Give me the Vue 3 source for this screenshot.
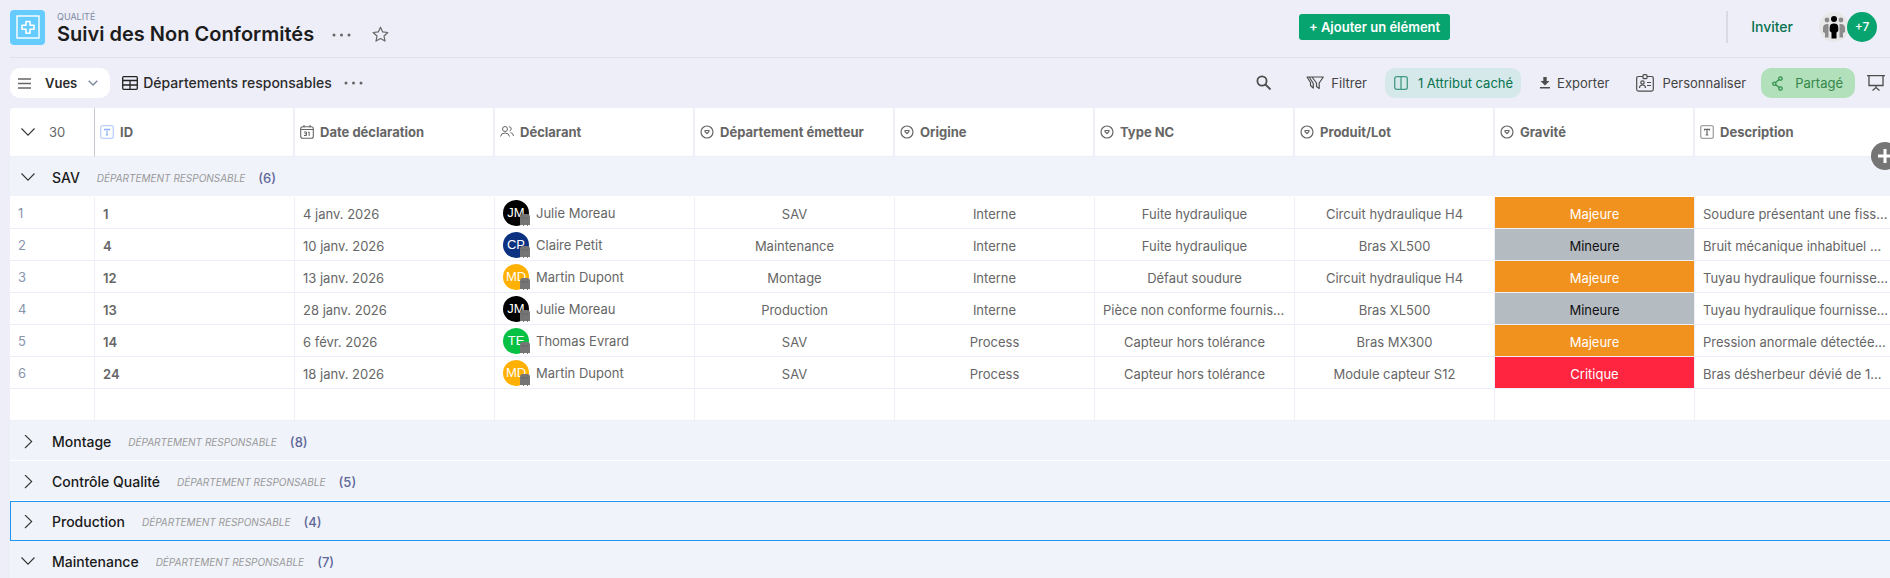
<script setup>
import { ref } from 'vue'

const columns = [
  { label: 'ID', icon: 'text', tone: 'blue' },
  { label: 'Date déclaration', icon: 'date' },
  { label: 'Déclarant', icon: 'people' },
  { label: 'Département émetteur', icon: 'select' },
  { label: 'Origine', icon: 'select' },
  { label: 'Type NC', icon: 'select' },
  { label: 'Produit/Lot', icon: 'select' },
  { label: 'Gravité', icon: 'select' },
  { label: 'Description', icon: 'text' },
]

const people = {
  JM: { name: 'Julie Moreau', tone: 'black' },
  CP: { name: 'Claire Petit', tone: 'navy' },
  MD: { name: 'Martin Dupont', tone: 'yellow' },
  TE: { name: 'Thomas Evrard', tone: 'green' },
}

const groups = ref([
  {
    name: 'SAV',
    count: 6,
    open: true,
    rows: [
      { id: 1, date: '4 janv. 2026', who: 'JM', dept: 'SAV', origin: 'Interne', type: 'Fuite hydraulique', product: 'Circuit hydraulique H4', level: 'Majeure', text: 'Soudure présentant une fissure' },
      { id: 4, date: '10 janv. 2026', who: 'CP', dept: 'Maintenance', origin: 'Interne', type: 'Fuite hydraulique', product: 'Bras XL500', level: 'Mineure', text: 'Bruit mécanique inhabituel moteur' },
      { id: 12, date: '13 janv. 2026', who: 'MD', dept: 'Montage', origin: 'Interne', type: 'Défaut soudure', product: 'Circuit hydraulique H4', level: 'Majeure', text: 'Tuyau hydraulique fournisseur' },
      { id: 13, date: '28 janv. 2026', who: 'JM', dept: 'Production', origin: 'Interne', type: 'Pièce non conforme fournisseur', product: 'Bras XL500', level: 'Mineure', text: 'Tuyau hydraulique fournisseur' },
      { id: 14, date: '6 févr. 2026', who: 'TE', dept: 'SAV', origin: 'Process', type: 'Capteur hors tolérance', product: 'Bras MX300', level: 'Majeure', text: 'Pression anormale détectée sur' },
      { id: 24, date: '18 janv. 2026', who: 'MD', dept: 'SAV', origin: 'Process', type: 'Capteur hors tolérance', product: 'Module capteur S12', level: 'Critique', text: 'Bras désherbeur dévié de 15 cm' },
    ],
  },
  { name: 'Montage', count: 8, open: false, rows: [] },
  { name: 'Contrôle Qualité', count: 5, open: false, rows: [] },
  { name: 'Production', count: 4, open: false, rows: [] },
  { name: 'Maintenance', count: 7, open: true, rows: [] },
])

const selected = ref('Production')

function toggle(group) {
  group.open = !group.open
  selected.value = group.name
}
</script>

<template>
  <div class="page">
    <header class="topbar">
      <svg class="logo" viewBox="0 0 35 35" fill="none" stroke="#fff">
        <rect x="7" y="6" width="22" height="22" stroke-width="1.4" />
        <path d="M16 11.5h4v3.700h4v4h-4v4h-4v-4h-4v-4h4z" stroke-width="1.6" stroke-linejoin="round" />
      </svg>
      <div class="heading">
        <span class="space">QUALITÉ</span>
        <h1>Suivi des Non Conformités</h1>
      </div>
      <button class="plain dots" aria-label="Options">
        <svg width="20" height="4" viewBox="0 0 20 4" fill="#666"><circle cx="2" cy="2" r="1.500" /><circle cx="9.500" cy="2" r="1.500" /><circle cx="17" cy="2" r="1.500" /></svg>
      </button>
      <button class="plain star" aria-label="Favori">
        <svg width="17" height="17" viewBox="0 0 17 17" fill="none" stroke="#666" stroke-width="1.2" stroke-linejoin="round"><path d="M8.500 1.200l2.200 4.700 5.100.600-3.800 3.500 1 5.100-4.500-2.500-4.500 2.500 1-5.100L1.200 6.500l5.100-.600z" /></svg>
      </button>
      <button class="add">+ Ajouter un élément</button>
      <div class="share">
        <a href="#" class="invite">Inviter</a>
        <svg class="team" viewBox="0 0 30 30">
          <circle cx="15" cy="15" r="15" fill="#e8e8e8" />
          <g fill="#8b8b8b">
            <circle cx="8" cy="8" r="2.400" /><circle cx="22" cy="8" r="2.400" />
            <path d="M9.500 12q-5.500-.5-5.500 4v4l2 1v4.500h3.500zM20.500 12q5.500-.5 5.500 4v4l-2 1v4.500h-3.500z" />
          </g>
          <circle cx="15" cy="7" r="3" />
          <path d="M15 11.500c-3 0-4.300 1.500-4.300 4v3.500l1.800 1.500v6h5v-6l1.800-1.500v-3.500c0-2.500-1.300-4-4.300-4z" />
        </svg>
        <span class="more">+7</span>
      </div>
    </header>

    <nav class="toolbar">
      <button class="views">
        <svg width="13" height="11" viewBox="0 0 13 11" stroke="#666" stroke-width="1.5"><path d="M0 1h13M0 5.500h13M0 10h13" /></svg>
        <span>Vues</span>
        <svg width="10" height="6" viewBox="0 0 10 6" fill="none" stroke="#7b879c" stroke-width="1.4"><path d="M.7.700L5 5 9.300.700" /></svg>
      </button>
      <h2 class="view-name">
        <svg width="16" height="14" viewBox="0 0 16 14" fill="none" stroke="#222" stroke-width="1.3"><rect x=".7" y=".7" width="14.600" height="12.600" rx="1" /><path d="M1 4.500h14M1 9h14M8 4.500V13" /></svg>
        Départements responsables
      </h2>
      <button class="plain view-dots" aria-label="Options de la vue">
        <svg width="20" height="4" viewBox="0 0 20 4" fill="#666"><circle cx="2" cy="2" r="1.500" /><circle cx="9.500" cy="2" r="1.500" /><circle cx="17" cy="2" r="1.500" /></svg>
      </button>

      <div class="tools">
        <button class="plain search" aria-label="Rechercher">
          <svg width="16" height="16" viewBox="0 0 16 16" fill="none" stroke="#4d4d4d" stroke-width="1.800"><circle cx="6" cy="6" r="4.600" /><path d="M9.500 9.500l5 5" /></svg>
        </button>
        <button class="plain filter">
          <svg width="18" height="14" viewBox="0 0 18 14" fill="none" stroke="#4d4d4d" stroke-width="1.200" stroke-linejoin="round"><path d="M6 1h11.300l-4.100 6v5.500l-2.700-2V7zM6.200 1H1l3.500 5.500v3l2.800 2.500V7.500L3.500 1.500" /></svg>
          Filtrer
        </button>
        <button class="plain hidden-attr">
          <svg width="14" height="14" viewBox="0 0 14 14" fill="none" stroke="#459b82" stroke-width="1.300"><rect x=".7" y=".7" width="12.600" height="12.600" rx="2" /><path d="M7 1v12" /></svg>
          1 Attribut caché
        </button>
        <button class="plain export">
          <svg width="10" height="12" viewBox="0 0 10 12" fill="#4d4d4d"><path d="M3.300 0h3.400v4H9.500L5 8.500.5 4h2.800zM0 10h10v1.500H0z" /></svg>
          Exporter
        </button>
        <button class="plain custom">
          <svg width="18" height="18" viewBox="0 0 18 18" fill="none" stroke="#4d4d4d" stroke-width="1.200"><path d="M7 2.500H2.500Q.7 2.500.7 4.300v11q0 1.800 1.800 1.800h13q1.800 0 1.800-1.800v-11q0-1.800-1.800-1.800H11" /><rect x="7" y=".7" width="4" height="4" rx="1" /><circle cx="6.500" cy="8.500" r="1.700" /><path d="M3.500 14q0-3 3-3t3 3M11 8.500h4M11 11.500h4" /></svg>
          Personnaliser
        </button>
        <button class="plain shared">
          <svg width="11" height="15" viewBox="0 0 11 15" fill="none" stroke="#36924e" stroke-width="1.300"><circle cx="8.500" cy="2.500" r="1.700" /><circle cx="2.300" cy="7.700" r="1.600" /><circle cx="8.500" cy="12.500" r="1.700" /><path d="M7.200 3.600L3.600 6.600M3.700 8.700l3.500 2.700" /></svg>
          Partagé
        </button>
        <button class="plain present" aria-label="Présenter">
          <svg width="18" height="16" viewBox="0 0 18 16" fill="none" stroke="#4d4d4d" stroke-width="1.300"><path d="M0 .7h18M2 1v9.500h14V1M9 10.500v2.500M5.500 15.500L9 12.500l3.500 3" /></svg>
        </button>
      </div>
    </nav>

    <main class="grid">
      <table>
        <colgroup>
          <col class="col-num">
          <col v-for="c in columns" :key="c.label" class="col-data">
        </colgroup>
        <thead>
          <tr>
            <th class="total" scope="col">
              <div class="head">
                <svg width="14" height="8" viewBox="0 0 14 8" fill="none" stroke="#333" stroke-width="1.100"><path d="M.5.500L7 7.200 13.500.500" /></svg>
                <span>30</span>
              </div>
            </th>
            <th v-for="c in columns" :key="c.label" scope="col">
              <div class="head" :class="c.tone">
                <svg v-if="c.icon === 'text'" class="ico" viewBox="0 0 14 14" fill="none">
                  <rect x=".7" y=".7" width="12.600" height="12.600" rx="2" stroke="currentColor" stroke-width="1.300" opacity=".6" />
                  <path d="M4.500 5.500v-1.200h5v1.200M7 4.300V10M5.700 10h2.600" stroke="currentColor" stroke-width="1.200" />
                </svg>
                <svg v-else-if="c.icon === 'date'" class="ico" viewBox="0 0 14 14" fill="none" stroke="currentColor">
                  <rect x=".7" y="1.700" width="12.600" height="11.600" rx="2" stroke-width="1.100" />
                  <path d="M1 4.500h12M4 0v2.500M10 0v2.500" stroke-width="1.100" />
                  <path d="M4 7h2.500v3.500H4M4.500 8.800h2M8 7.500L9.200 7v4" stroke-width="1" />
                </svg>
                <svg v-else-if="c.icon === 'people'" class="ico" viewBox="0 0 14 14" fill="none" stroke="currentColor" stroke-width="1">
                  <circle cx="5" cy="4" r="2.500" />
                  <path d="M.5 11.500q.5-3.500 4.500-3.500t4.500 3.500M9 1.600q2.500.4 2.200 2.400-.2 1.500-1.700 2M10.500 7.500q2.800.5 3 3.500" />
                </svg>
                <svg v-else class="ico" viewBox="0 0 14 14" fill="none" stroke="currentColor" stroke-width="1.200">
                  <circle cx="7" cy="7" r="6" />
                  <path d="M5 5.500h4v1L7 8.700 5 6.500z" stroke-linejoin="round" />
                </svg>
                <span>{{ c.label }}</span>
              </div>
            </th>
          </tr>
        </thead>
        <tbody v-for="g in groups" :key="g.name">
          <tr>
            <th class="group" :class="{ selected: selected === g.name }" colspan="10" scope="colgroup">
              <button class="plain group-btn" :aria-expanded="g.open" @click="toggle(g)">
                <svg width="14" height="14" viewBox="0 0 14 14" fill="none" stroke="#333" stroke-width="1.100">
                  <path v-if="g.open" d="M.5 2.500L7 9.200l6.500-6.700" />
                  <path v-else d="M4 0l6.700 6.500L4 13" />
                </svg>
                <span class="group-name">{{ g.name }}</span>
                <em>DÉPARTEMENT RESPONSABLE</em>
                <span class="group-count">({{ g.count }})</span>
              </button>
            </th>
          </tr>
          <template v-if="g.open && g.rows.length">
            <tr v-for="(r, i) in g.rows" :key="r.id">
              <td class="num">{{ i + 1 }}</td>
              <td class="id">{{ r.id }}</td>
              <td>{{ r.date }}</td>
              <td class="person">
                <div class="who">
                  <span class="avatar" :class="people[r.who].tone">
                    {{ r.who }}
                    <svg class="ghost" width="10" height="12" viewBox="0 0 10 12">
                      <path d="M0 11V3q0-3 3-3h4q3 0 3 3v8H8v1H7v-1H4v1H3v-1z" fill="#757575" />
                      <path d="M2.500 3.500l1 1M3.500 3.500l-1 1M6 3.500l1 1M7 3.500l-1 1" stroke="#4c4c4c" stroke-width=".6" />
                    </svg>
                  </span>
                  {{ people[r.who].name }}
                </div>
              </td>
              <td class="center">{{ r.dept }}</td>
              <td class="center">{{ r.origin }}</td>
              <td class="center">{{ r.type }}</td>
              <td class="center">{{ r.product }}</td>
              <td class="center level" :class="r.level.toLowerCase()">{{ r.level }}</td>
              <td class="desc">{{ r.text }}</td>
            </tr>
            <tr>
              <td v-for="n in 10" :key="n"></td>
            </tr>
          </template>
        </tbody>
      </table>
      <button class="add-column" aria-label="Ajouter une colonne">
        <svg width="14" height="14" viewBox="0 0 14 14" stroke="#fff" stroke-width="3"><path d="M7 0v14M0 7h14" /></svg>
      </button>
    </main>
  </div>
</template>

<style>
body {
  margin: 0;
  overflow: hidden;
  background: #eeeef8;
}
</style>

<style scoped>
.page {
  min-height: 100vh;
  padding-left: 10px;
  overflow: hidden;
  background: #eeeef8;
  color: #444;
  font-family: Inter, "Liberation Sans", sans-serif;
  font-size: 13px;
  line-height: 16px;
}
svg {
  display: block;
  flex: none;
}
button {
  font: inherit;
  color: inherit;
  cursor: pointer;
}
.plain {
  display: flex;
  align-items: center;
  padding: 0;
  border: 0;
  background: none;
}

/* top bar */
.topbar {
  display: flex;
  align-items: center;
  height: 57px;
  padding-right: 13px;
  border-bottom: 1px solid #e1e1ec;
}
.logo {
  width: 35px;
  height: 35px;
  margin-bottom: 2px;
  border-radius: 4px;
  background: #66ccff;
}
.heading {
  margin-left: 12px;
  white-space: nowrap;
}
.space {
  display: block;
  color: #7c88a3;
  font-size: 9px;
  line-height: 10px;
}
h1 {
  margin: 0;
  color: #1c1c1c;
  font-size: 20px;
  font-weight: 600;
  line-height: 24px;
}
.dots {
  margin: 12px 0 0 18px;
}
.star {
  margin: 12px 0 0 20px;
}
.add {
  height: 26px;
  margin: 0 276px 4px auto;
  padding: 0 10px;
  border: 0;
  border-radius: 3px;
  background: #08a46f;
  color: #fff;
  font-weight: 600;
  white-space: nowrap;
}
.share {
  display: flex;
  align-items: center;
  height: 32px;
  margin-bottom: 4px;
  padding-left: 23px;
  border-left: 2px solid #dadae2;
}
.invite {
  margin-right: 26px;
  color: #08734f;
  font-size: 14px;
  font-weight: 500;
  text-decoration: none;
}
.team {
  width: 30px;
  height: 30px;
}
.more {
  width: 30px;
  margin-left: -2px;
  border-radius: 50%;
  background: #08a46f;
  color: #fff;
  font-size: 12px;
  font-weight: 500;
  line-height: 30px;
  text-align: center;
}

/* toolbar */
.toolbar {
  display: flex;
  align-items: center;
  height: 50px;
  white-space: nowrap;
}
.views {
  display: flex;
  align-items: center;
  height: 30px;
  padding: 0 12px 0 8px;
  border: 0;
  border-radius: 10px;
  background: #fff;
  color: #2b2b2b;
  font-weight: 600;
}
.views span {
  margin: 0 11px 0 14px;
}
.view-name {
  display: flex;
  align-items: center;
  gap: 5px;
  margin: 0 12px;
  color: #2b2b2b;
  font-size: 14px;
  font-weight: 500;
}
.tools {
  display: flex;
  align-items: center;
  margin-left: auto;
  padding-right: 5px;
}
.tools button {
  height: 30px;
}
.search {
  margin-right: 34px;
}
.filter {
  gap: 7px;
  margin-right: 18px;
}
.hidden-attr {
  gap: 10px;
  margin-right: 19px;
  padding: 0 8px 0 9px;
  border-radius: 10px;
  background: #d5e8ea;
  color: #08734f;
}
.export {
  gap: 7px;
  margin-right: 27px;
}
.custom {
  gap: 8px;
  margin-right: 15px;
}
.shared {
  gap: 12px;
  margin-right: 12px;
  padding: 0 12px 0 11px;
  border-radius: 10px;
  background: #b1e0bb;
  color: #36864a;
}

/* table */
.grid {
  position: relative;
}
table {
  width: 1885px;
  border-spacing: 0;
  border-radius: 4px 0 0 0;
  table-layout: fixed;
  background: #fff;
  color: #666;
}
.col-num {
  width: 85px;
}
.col-data {
  width: 200px;
}
th,
td {
  box-sizing: border-box;
  text-align: left;
}
thead th {
  height: 49px;
  padding: 0 0 0 5px;
  border-right: 2px solid #eeeef8;
  border-bottom: 1px solid #eeeef8;
  font-weight: 700;
}
thead .total {
  padding-left: 11px;
  border-right: 1px solid #c8c8d0;
  font-weight: 400;
}
.head {
  display: flex;
  align-items: center;
  gap: 6px;
}
.total .head {
  gap: 14px;
}
.ico {
  width: 14px;
  height: 14px;
}
.blue .ico {
  color: #8fb0f5;
}
.group {
  height: 40px;
  padding: 2px 0 0;
  border-bottom: 1px solid #fff;
  background: #f0f3f9;
  font-weight: 400;
}
.group.selected {
  border: 1px solid #1f97f0;
}
.group-btn {
  width: 100%;
  padding-left: 11px;
}
.selected .group-btn {
  padding-left: 10px;
}
.group-name {
  margin: 0 17px;
  color: #1a1a1a;
  font-size: 14px;
  font-weight: 500;
}
em {
  color: #999;
  font-size: 10px;
}
.group-count {
  margin-left: 13px;
  color: #5f6799;
  font-weight: 500;
}
td {
  height: 32px;
  padding: 3px 8px 0;
  border-right: 1px solid #eeeef8;
  border-bottom: 1px solid #eeeef8;
  overflow: hidden;
  text-overflow: ellipsis;
  white-space: nowrap;
}
.num {
  padding-top: 0;
  color: #8794ad;
}
.id {
  font-weight: 600;
}
.center {
  text-align: center;
}
.desc {
  padding-right: 5px;
}
.person {
  padding-top: 1px;
}
.who {
  display: flex;
  align-items: center;
  gap: 7px;
}
.avatar {
  position: relative;
  width: 26px;
  border-radius: 50%;
  color: #fff;
  font-family: "Liberation Sans", sans-serif;
  line-height: 26px;
  text-align: center;
}
.ghost {
  position: absolute;
  right: -1px;
  bottom: 0;
}
.black {
  background: #000;
}
.navy {
  background: #0c3180;
}
.yellow {
  background: #ffb000;
}
.green {
  background: #06c144;
}
.level {
  color: #fff;
}
.majeure {
  background: #f2921e;
  background-clip: padding-box;
}
.mineure {
  background: #b4bbc1;
  background-clip: padding-box;
  color: #111;
}
.critique {
  background: #ff2541;
  background-clip: padding-box;
}
.add-column {
  display: flex;
  align-items: center;
  justify-content: center;
  position: absolute;
  top: 34px;
  right: -9px;
  width: 28px;
  height: 28px;
  padding: 0;
  border: 0;
  border-radius: 50%;
  background: #757575;
}
</style>
